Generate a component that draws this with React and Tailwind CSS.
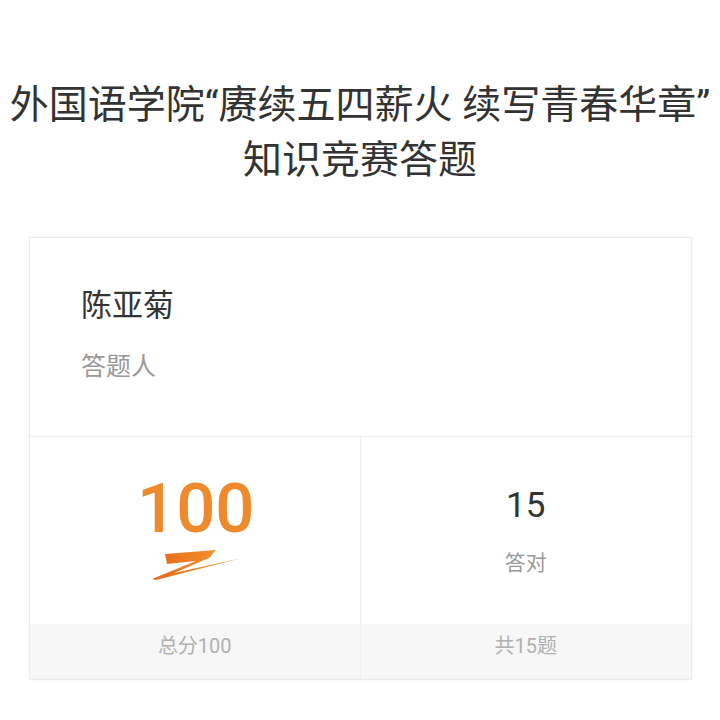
const CJK = { fontFamily: 'Roboto, "Noto Sans CJK SC", sans-serif' };

function Swoosh() {
  return (
    <svg width="94" height="34" viewBox="0 0 94 34" className="block">
      <defs>
        <linearGradient id="sw" x1="0" y1="0" x2="1" y2="0">
          <stop offset="0" stopColor="#e8661a" />
          <stop offset="0.6" stopColor="#f08a2a" />
          <stop offset="1" stopColor="#f5a040" />
        </linearGradient>
      </defs>
      <path d="M15 6 L66 2 L59 10 L24 25 L92 10 L6 32 L2 31 L46 13 L17 16 Z" fill="url(#sw)" />
    </svg>
  );
}

export default function App() {
  return (
    <div className="w-[720px] h-[720px] bg-white overflow-hidden" style={CJK}>
      {/* Title */}
      <h1 className="pt-[78px] text-center text-[39px] leading-[55px] text-[#333] whitespace-nowrap font-normal">
        外国语学院“赓续五四薪火 续写青春华章”
        <br />
        知识竞赛答题
      </h1>

      {/* Result card */}
      <div className="mt-[49px] ml-[29px] w-[663px] border border-[#ebebeb] shadow-[0_0_4px_rgba(0,0,0,0.04)] bg-white">
        <div className="h-[199px] pl-[51px] pt-[52px] border-b border-[#ececec]">
          <p className="text-[31px] leading-none text-[#333]">陈亚菊</p>
          <p className="mt-[33px] text-[25px] leading-none text-[#999]">答题人</p>
        </div>

        <div className="grid grid-cols-2">
          <div className="flex flex-col border-r border-[#eeeeee]">
            <div className="h-[187px] flex flex-col items-center pt-[37px]">
              <p className="text-[69px] leading-none font-medium text-[#ee8a2b] pl-[2px]">100</p>
              <div className="mt-[5px] ml-[4px]">
                <Swoosh />
              </div>
            </div>
            <div className="h-[55px] bg-[#f7f7f7] flex justify-center pt-[12px] text-[20px] leading-none text-[#b0b0b0]">
              总分100
            </div>
          </div>
          <div className="flex flex-col">
            <div className="h-[187px] flex flex-col items-center pt-[51px]">
              <p className="text-[35px] leading-none text-[#333]">15</p>
              <p className="mt-[30px] text-[21px] leading-none text-[#999]">答对</p>
            </div>
            <div className="h-[55px] bg-[#f7f7f7] flex justify-center pt-[12px] text-[20px] leading-none text-[#b0b0b0]">
              共15题
            </div>
          </div>
        </div>
      </div>
    </div>
  );
}
